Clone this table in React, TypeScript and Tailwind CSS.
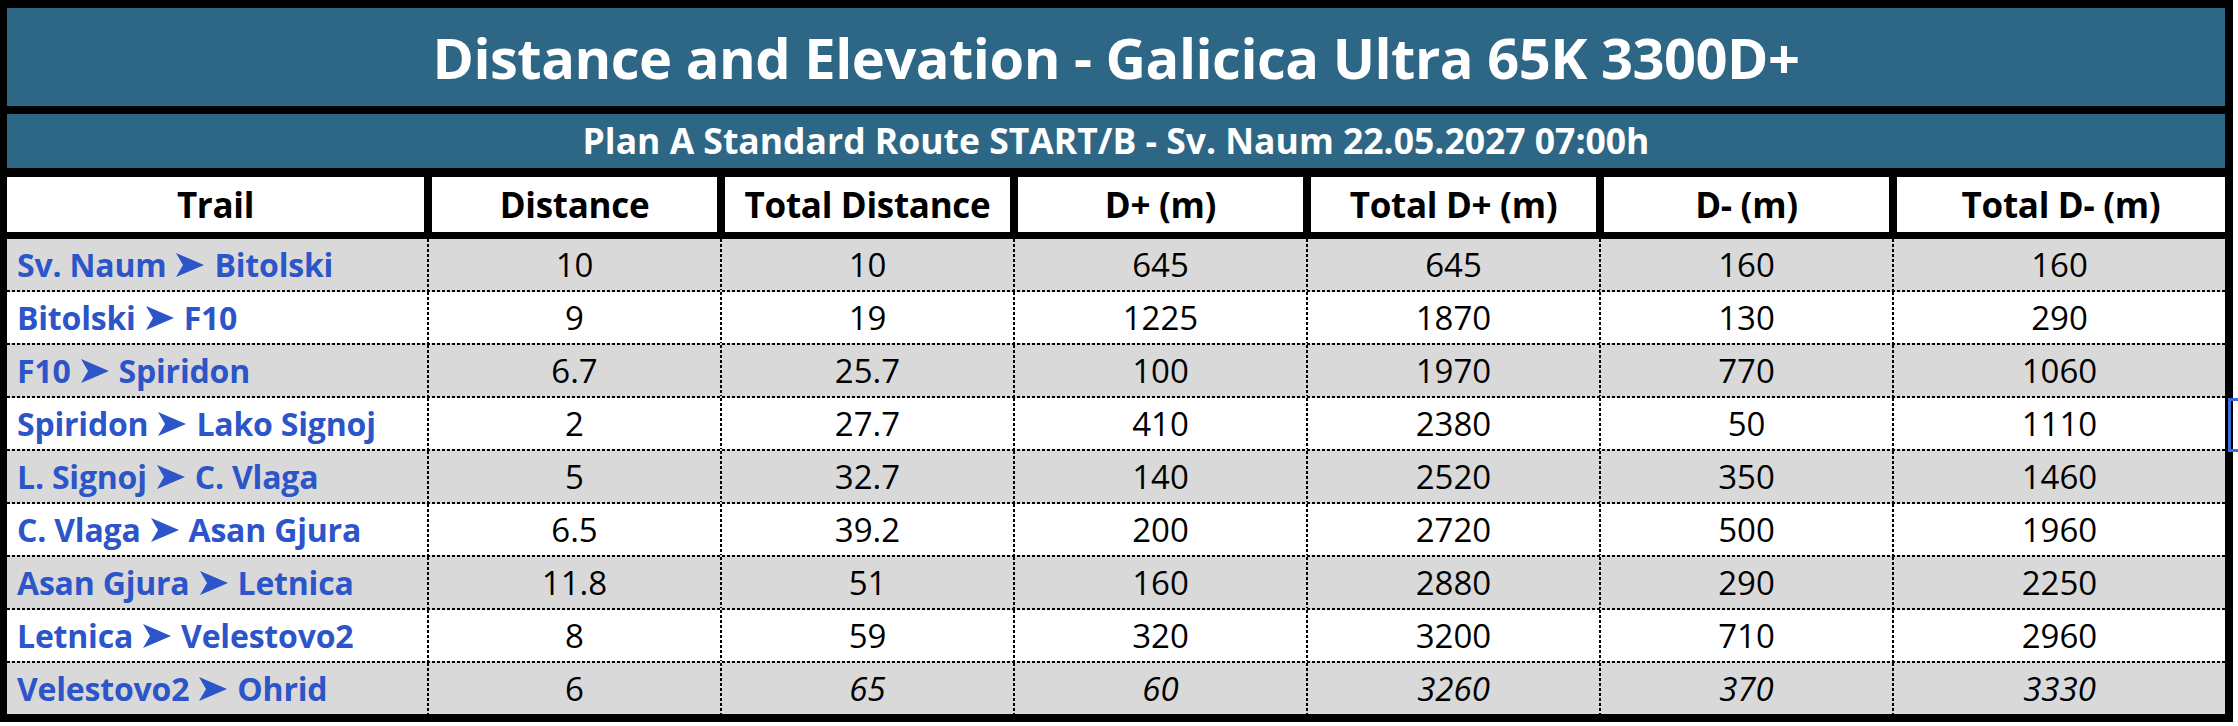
import React from "react";

type Row = { trail: [string, string]; v: string[] };

const rows: Row[] = [
  { trail: ["Sv. Naum", "Bitolski"], v: ["10", "10", "645", "645", "160", "160"] },
  { trail: ["Bitolski", "F10"], v: ["9", "19", "1225", "1870", "130", "290"] },
  { trail: ["F10", "Spiridon"], v: ["6.7", "25.7", "100", "1970", "770", "1060"] },
  { trail: ["Spiridon", "Lako Signoj"], v: ["2", "27.7", "410", "2380", "50", "1110"] },
  { trail: ["L. Signoj", "C. Vlaga"], v: ["5", "32.7", "140", "2520", "350", "1460"] },
  { trail: ["C. Vlaga", "Asan Gjura"], v: ["6.5", "39.2", "200", "2720", "500", "1960"] },
  { trail: ["Asan Gjura", "Letnica"], v: ["11.8", "51", "160", "2880", "290", "2250"] },
  { trail: ["Letnica", "Velestovo2"], v: ["8", "59", "320", "3200", "710", "2960"] },
  { trail: ["Velestovo2", "Ohrid"], v: ["6", "65", "60", "3260", "370", "3330"] },
];

const headers = ["Trail", "Distance", "Total Distance", "D+ (m)", "Total D+ (m)", "D- (m)", "Total D- (m)"];

function Arrow() {
  return (
    <svg width="28" height="24" viewBox="0 0 28 24" className="mx-[10px] shrink-0">
      <polygon points="0,0 28,12 0,24 7,12" fill="#2b55c8" />
    </svg>
  );
}

function VDots() {
  return <div className="w-[2px] bg-[repeating-linear-gradient(to_bottom,#000_0_3px,transparent_3px_5px)]" />;
}

export default function App() {
  return (
    <div className="relative w-[2238px] h-[726px] bg-white font-['Open_Sans',sans-serif] overflow-hidden">
      <div className="w-[2233px] h-[722px] bg-black pt-[8px] pb-[8px] pl-[7px] pr-[8px] flex flex-col">
        <div className="h-[98px] bg-[#2e6786] flex items-center justify-center text-white font-bold text-[56px] leading-none tracking-[-0.5px]">
          Distance and Elevation - Galicica Ultra 65K 3300D+
        </div>
        <div className="h-[54px] mt-[8px] bg-[#2e6786] flex items-center justify-center text-white font-bold text-[35.5px] leading-none">
          Plan A Standard Route START/B - Sv. Naum 22.05.2027 07:00h
        </div>
        <div className="h-[55px] mt-[9px] grid grid-cols-[417px_repeat(5,285px)_1fr] gap-x-[8px]">
          {headers.map((h) => (
            <div key={h} className="bg-white flex items-center justify-center text-black font-bold text-[35px] leading-none tracking-[-0.3px]">
              {h}
            </div>
          ))}
        </div>
        <div className="h-[475px] mt-[7px] flex flex-col">
          {rows.map((r, i) => {
            const last = i === rows.length - 1;
            return (
              <React.Fragment key={i}>
                <div
                  className={`h-[51px] grid grid-cols-[420px_2px_291px_2px_291px_2px_291px_2px_291px_2px_291px_2px_1fr] ${i % 2 === 0 ? "bg-[#d9d9d9]" : "bg-white"}`}
                >
                  <div className="flex items-center pl-[10px] text-[#2b55c8] font-bold text-[32px] leading-none tracking-[-0.2px] whitespace-nowrap">
                    <span>{r.trail[0]}</span>
                    <Arrow />
                    <span>{r.trail[1]}</span>
                  </div>
                  {r.v.map((val, j) => (
                    <React.Fragment key={j}>
                      <VDots />
                      <div
                        className={`flex items-center justify-center text-black text-[33px] leading-none ${last && j > 0 ? "italic" : ""}`}
                      >
                        {val}
                      </div>
                    </React.Fragment>
                  ))}
                </div>
                {!last && (
                  <div className="h-[2px] bg-[#d9d9d9]">
                    <div className="h-[2px] bg-[repeating-linear-gradient(to_right,#000_0_3px,transparent_3px_5px)]" />
                  </div>
                )}
              </React.Fragment>
            );
          })}
        </div>
      </div>
      <div className="absolute left-[2228px] top-[398px] w-[10px] h-[54px] border-l-[3px] border-t-[3px] border-b-[3px] border-[#3b6fe0]" />
    </div>
  );
}
